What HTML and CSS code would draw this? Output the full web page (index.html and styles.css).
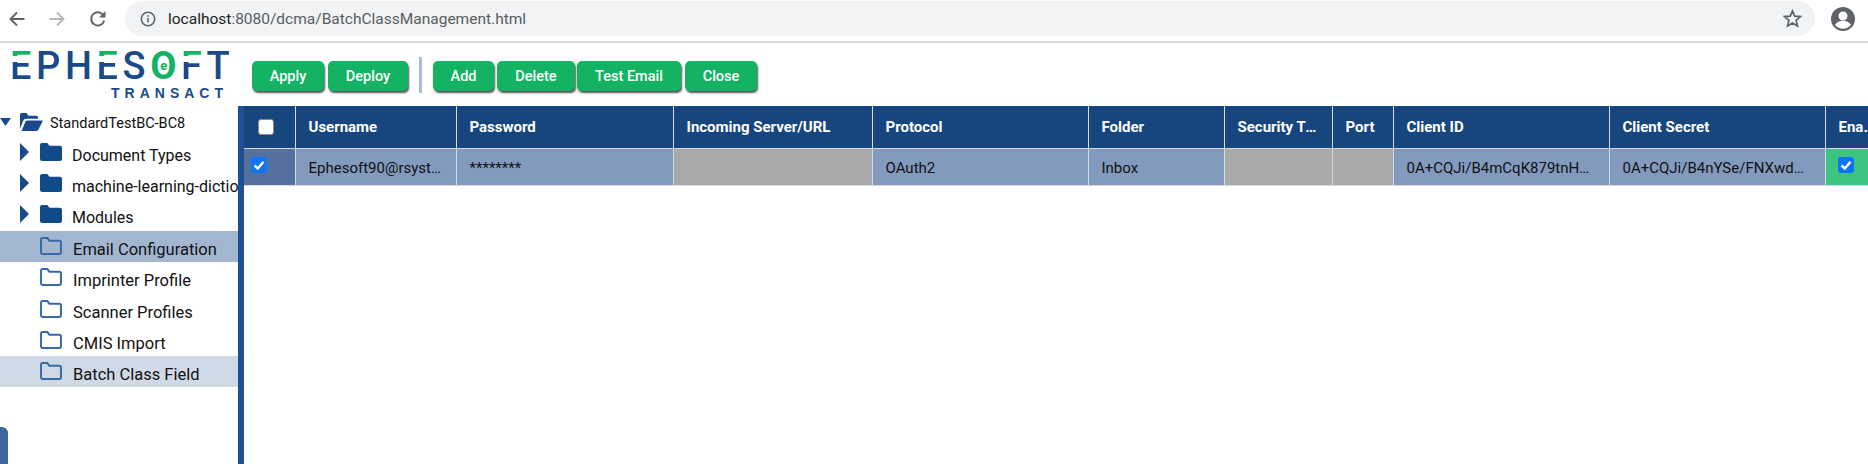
FILE: index.html
```html
<!DOCTYPE html>
<html lang="en">
<head>
<meta charset="utf-8">
<title>Batch Class Management</title>
<link rel="stylesheet" href="styles.css">
</head>
<body>
<div class="chrome">
  <svg class="nav nav-back" viewBox="0 0 16 16"><path d="M15.5 8H2M8 1.5 1.5 8 8 14.5" fill="none" stroke="#5f6368" stroke-width="1.9"/></svg>
  <svg class="nav nav-fwd" viewBox="0 0 16 16"><path d="M.5 8H14M8 1.5 14.5 8 8 14.5" fill="none" stroke="#b4b6b9" stroke-width="1.9"/></svg>
  <svg class="nav nav-reload" viewBox="0 0 18 18"><path d="M15.2 10.5A6.6 6.6 0 1 1 14 4.8" fill="none" stroke="#5f6368" stroke-width="1.9"/><path d="M16.5 1v6.6H10z" fill="#5f6368"/></svg>
  <div class="omnibox">
    <svg class="info" viewBox="0 0 16 16"><circle cx="8" cy="8" r="6.7" fill="none" stroke="#5f6368" stroke-width="1.6"/><path d="M7.2 7h1.6v4.6H7.2zM7.2 4.2h1.6v1.6H7.2z" fill="#5f6368"/></svg>
    <span class="url"><span class="host">localhost</span>:8080/dcma/BatchClassManagement.html</span>
    <svg class="star" viewBox="0 0 18 18"><path d="M9 1.8 11.1 6.8l5.4.4-4.1 3.5 1.3 5.3L9 13.2 4.3 16l1.3-5.3L1.5 7.2l5.4-.4z" fill="none" stroke="#5f6368" stroke-width="1.6"/></svg>
  </div>
  <svg class="avatar" viewBox="0 0 24 24"><circle cx="12" cy="12" r="12" fill="#5f6368"/><circle cx="12" cy="9" r="4.500" fill="#fff"/><path d="M4 18c1.500-3 5-4.200 8-4.200s6.500 1.200 8 4.200a10.500 10.500 0 0 1-16 0z" fill="#fff"/></svg>
</div>

<header class="topbar">
  <div class="logo">
    <div class="logo-main"><span class="logo-e">E</span><span>PH</span><span class="logo-e">E</span><span>S</span><span class="logo-o">O<span class="logo-o-e">e</span></span><span class="logo-e">F</span><span>T</span></div>
    <div class="logo-sub">TRANSACT</div>
  </div>
  <div class="toolbar">
    <button class="btn btn-apply">Apply</button>
    <button class="btn btn-deploy">Deploy</button>
    <span class="sep"></span>
    <button class="btn btn-add">Add</button>
    <button class="btn btn-delete">Delete</button>
    <button class="btn btn-test">Test Email</button>
    <button class="btn btn-close">Close</button>
  </div>
</header>

<main class="main">
  <aside class="tree">
    <div class="node root">
      <svg class="arrow-down" viewBox="0 0 10 7" preserveAspectRatio="none"><path d="M0 0h10L5 7z"/></svg>
      <svg class="fopen" viewBox="0 0 24 18" preserveAspectRatio="none"><path d="M1 16V2.500Q1 1 2.500 1h5l2 2.500h8q1.500 0 1.500 1.500v1.500H7Q5 6.500 4 8.500zM2.500 18l4-9q.5-1 2-1H23q1 0 .5 1l-4 7.500q-.8 1.500-2.500 1.500z"/></svg>
      <span class="label">StandardTestBC-BC8</span>
    </div>
    <div class="node branch"><svg class="caret" viewBox="0 0 9 15" preserveAspectRatio="none"><path d="M0 0l9 7.500L0 15z"/></svg><svg class="fill" viewBox="0 0 21 17" preserveAspectRatio="none"><path d="M0 2Q0 0 2 0h5l2 2.500h10q2 0 2 2V15q0 2-2 2H2q-2 0-2-2z"/></svg><span class="label">Document Types</span></div>
    <div class="node branch"><svg class="caret" viewBox="0 0 9 15" preserveAspectRatio="none"><path d="M0 0l9 7.500L0 15z"/></svg><svg class="fill" viewBox="0 0 21 17" preserveAspectRatio="none"><path d="M0 2Q0 0 2 0h5l2 2.500h10q2 0 2 2V15q0 2-2 2H2q-2 0-2-2z"/></svg><span class="label">machine-learning-dictionary</span></div>
    <div class="node branch"><svg class="caret" viewBox="0 0 9 15" preserveAspectRatio="none"><path d="M0 0l9 7.500L0 15z"/></svg><svg class="fill" viewBox="0 0 21 17" preserveAspectRatio="none"><path d="M0 2Q0 0 2 0h5l2 2.500h10q2 0 2 2V15q0 2-2 2H2q-2 0-2-2z"/></svg><span class="label">Modules</span></div>
    <div class="node leaf selected"><svg class="line" viewBox="0 0 21 17" preserveAspectRatio="none"><path d="M1 2.500Q1 1 2.500 1H7l2 2.500h9.500q1.500 0 1.500 1.500v9.500q0 1.500-1.500 1.500h-16Q1 16 1 14.500z"/></svg><span class="label">Email Configuration</span></div>
    <div class="node leaf"><svg class="line" viewBox="0 0 21 17" preserveAspectRatio="none"><path d="M1 2.500Q1 1 2.500 1H7l2 2.500h9.500q1.500 0 1.500 1.500v9.500q0 1.500-1.500 1.500h-16Q1 16 1 14.500z"/></svg><span class="label">Imprinter Profile</span></div>
    <div class="node leaf"><svg class="line" viewBox="0 0 21 17" preserveAspectRatio="none"><path d="M1 2.500Q1 1 2.500 1H7l2 2.500h9.500q1.500 0 1.500 1.500v9.500q0 1.500-1.500 1.500h-16Q1 16 1 14.500z"/></svg><span class="label">Scanner Profiles</span></div>
    <div class="node leaf"><svg class="line" viewBox="0 0 21 17" preserveAspectRatio="none"><path d="M1 2.500Q1 1 2.500 1H7l2 2.500h9.500q1.500 0 1.500 1.500v9.500q0 1.500-1.500 1.500h-16Q1 16 1 14.500z"/></svg><span class="label">CMIS Import</span></div>
    <div class="node leaf hovered"><svg class="line" viewBox="0 0 21 17" preserveAspectRatio="none"><path d="M1 2.500Q1 1 2.500 1H7l2 2.500h9.500q1.500 0 1.500 1.500v9.500q0 1.500-1.500 1.500h-16Q1 16 1 14.500z"/></svg><span class="label">Batch Class Field</span></div>
    <div class="side-tab"></div>
  </aside>
  <section class="content">
    <table class="grid">
      <colgroup>
        <col class="c-check"><col class="c-user"><col class="c-pass"><col class="c-url"><col class="c-proto"><col class="c-folder"><col class="c-sec"><col class="c-port"><col class="c-id"><col class="c-secret"><col class="c-ena">
      </colgroup>
      <thead>
        <tr>
          <th class="check-head"><input class="cb cb-head" type="checkbox" aria-label="Select all"></th>
          <th>Username</th><th>Password</th><th>Incoming Server/URL</th><th>Protocol</th><th>Folder</th><th>Security Type</th><th>Port</th><th>Client ID</th><th>Client Secret</th><th class="ena-head">Enabled</th>
        </tr>
      </thead>
      <tbody>
        <tr>
          <td class="check-cell"><input class="cb" type="checkbox" checked aria-label="Select row"></td>
          <td>Ephesoft90@rsystems.com</td>
          <td>********</td>
          <td class="empty"></td>
          <td>OAuth2</td>
          <td>Inbox</td>
          <td class="empty"></td>
          <td class="empty"></td>
          <td>0A+CQJi/B4mCqK879tnHq2LmXw7Ys</td>
          <td>0A+CQJi/B4nYSe/FNXwdP3kTzR8Vb</td>
          <td class="ena-cell"><input class="cb" type="checkbox" checked aria-label="Enabled"></td>
        </tr>
      </tbody>
    </table>
  </section>
</main>
</body>
</html>
```
FILE: styles.css
```css
* { box-sizing: border-box; }
html, body { margin: 0; height: 100%; background: #fff; overflow: hidden; }
body { width: 1868px; height: 464px; display: flex; flex-direction: column; font-family: Roboto, "Liberation Sans", sans-serif; color: #111; }

.chrome { height: 43px; flex: none; display: flex; align-items: flex-start; border-bottom: 2px solid #d9d9dd; padding-top: 1px; }
.nav { flex: none; margin-top: 10px; }
.nav-back { width: 16px; height: 16px; margin-left: 9px; }
.nav-fwd { width: 16px; height: 16px; margin-left: 24px; }
.nav-reload { width: 18px; height: 18px; margin-left: 24px; margin-top: 9px; }
.omnibox { margin-left: 18px; width: 1690px; height: 35px; background: #f1f3f4; border-radius: 18px; display: flex; align-items: center; padding: 0 13px 0 15px; }
.info { width: 16px; height: 16px; flex: none; }
.url { margin-left: 12px; font-size: 15.5px; color: #5a5d61; flex: 1; white-space: nowrap; }
.host { color: #202124; }
.star { width: 19px; height: 19px; flex: none; }
.avatar { width: 24px; height: 24px; flex: none; margin-left: 16px; margin-top: 6px; }

.topbar { height: 63px; flex: none; display: flex; align-items: flex-start; }
.logo { width: 252px; flex: none; padding: 6px 0 0 10px; }
.logo-main { height: 34px; display: flex; font-family: Roboto, sans-serif; font-weight: 500; font-size: 38px; line-height: 34px; letter-spacing: 4.600px; color: #1a4a8a; white-space: nowrap; }
.logo-e { background: linear-gradient(#14b364 0 22%, #fff 22% 38%, #1a4a8a 38%); background-clip: text; -webkit-background-clip: text; color: transparent; }
.logo-o { position: relative; color: #14b364; font-weight: 700; }
.logo-o-e { position: absolute; left: 10px; top: 0; font-size: 13px; line-height: 33px; letter-spacing: 0; }
.logo-sub { margin: 3px 0 0 101px; font-family: "Liberation Sans", Arial, sans-serif; font-weight: 700; font-size: 14px; line-height: 14px; letter-spacing: 5px; color: #1a4a8a; }

.toolbar { display: flex; align-items: flex-start; padding-top: 18px; }
.btn { height: 30px; border: 0; padding: 1px 0 0; border-radius: 5px; background: #14b364; color: #fff; font: 500 14.500px/29px Roboto, sans-serif; box-shadow: 1px 2px 2px #555; }
.btn-apply { width: 72px; }
.btn-deploy { width: 80px; margin-left: 4px; }
.sep { width: 3px; height: 36px; background: #a8bcd6; margin: -4px 11px 0; }
.btn-add { width: 61px; }
.btn-delete { width: 78px; margin-left: 3px; }
.btn-test { width: 104px; margin-left: 2px; }
.btn-close { width: 72px; margin-left: 4px; }

.main { flex: 1; display: flex; min-height: 0; }
.tree { width: 244px; flex: none; border-right: 6px solid #1f4f96; position: relative; font-size: 16px; overflow: hidden; }
.node { height: 31px; display: flex; align-items: center; white-space: nowrap; overflow: hidden; }
.label { line-height: 27px; }
.root { height: 32px; font-size: 14.500px; }
.root .label { padding-top: 2px; }
.branch .label { padding-top: 4px; }
.leaf { height: 31.250px; font-size: 16.500px; }
.leaf .label { padding-top: 6px; }
.arrow-down { width: 11px; height: 8px; fill: #1a4a8a; flex: none; }
.fopen { width: 24px; height: 19px; fill: #1a4a8a; flex: none; margin: -1px 7px 0 8px; }
.caret { width: 9px; height: 18px; fill: #1a4a8a; flex: none; margin: -3px 11px 0 20px; }
.fill { width: 22px; height: 18px; fill: #0f4a8a; flex: none; margin: -3px 10px 0 0; }
.line { width: 22px; height: 18px; fill: none; stroke: #356ba6; stroke-width: 1.900; flex: none; margin: -1px 11px 0 40px; }
.selected { background: #a3b6d0; }
.hovered { background: #d0dae6; }
.side-tab { position: absolute; left: 0; bottom: 0; width: 8px; height: 37px; background: #3f669b; border-top-right-radius: 6px; }

.content { flex: 1; min-width: 0; overflow: hidden; }
.grid { width: 1637px; table-layout: fixed; border-collapse: collapse; font-size: 15px; }
.c-check { width: 51px; } .c-user { width: 161px; } .c-pass { width: 217px; } .c-url { width: 199px; } .c-proto { width: 216px; } .c-folder { width: 136px; } .c-sec { width: 108px; } .c-port { width: 61px; } .c-id { width: 216px; } .c-secret { width: 216px; } .c-ena { width: 56px; }
th, td { padding: 0 12px 0 13px; text-align: left; white-space: nowrap; overflow: hidden; text-overflow: ellipsis; border-left: 1px solid #d5dbe4; border-bottom: 1px solid #d5dbe4; }
th { height: 42px; padding-top: 1px; background: #17467f; color: #fff; font-weight: 700; font-size: 15px; }
td { height: 37px; background: #829abd; color: #111; padding-top: 2px; }
th:first-child, td:first-child { border-left: 0; }
.empty { background: #a9a9a9; }
.check-head { padding: 0 6px 0 0; }
.check-cell { background: #54719d; padding: 0 0 0 7px; }
.ena-cell { background: #3fc380; padding: 0 0 0 12px; }
.ena-head { padding-right: 0; }
.cb { appearance: none; -webkit-appearance: none; display: block; width: 16px; height: 16px; margin: 0 0 3px; border-radius: 3px; background: #0b75f5 url("data:image/svg+xml,%3Csvg xmlns='http://www.w3.org/2000/svg' viewBox='0 0 16 16'%3E%3Cpath d='M3.500 8.500 6.800 11.500 12.500 4.800' fill='none' stroke='white' stroke-width='2.400'/%3E%3C/svg%3E") center/100% no-repeat; }
.cb-head { margin: 0 auto; background: #fff; border: 1px solid #8a8a8a; }
```
